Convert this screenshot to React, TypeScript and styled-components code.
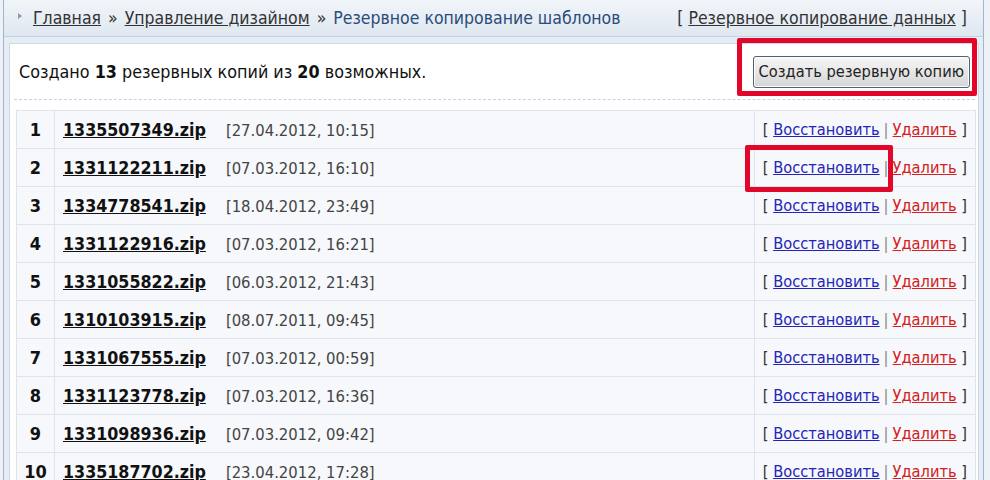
import React from "react";
import styled, { createGlobalStyle } from "styled-components";

const GlobalStyle = createGlobalStyle`
  html, body {
    margin: 0;
    padding: 0;
    background: #eef2f6;
    font-family: "DejaVu Sans Condensed", "DejaVu Sans", sans-serif;
    overflow: hidden;
  }
`;

const Frame = styled.div`
  position: relative;
  margin-left: 3px;
  width: 979px;
  height: 480px;
  border-left: 1px solid #9fb6cf;
  border-right: 1px solid #9fb6cf;
  background: #e6edf4;
  overflow: hidden;
`;

const Breadcrumbs = styled.div`
  display: flex;
  align-items: center;
  justify-content: space-between;
  height: 36px;
  padding: 0 16px 0 14px;
  background: linear-gradient(#f1f5f9, #dfe7f0);
  border-bottom: 1px solid #c3d1e0;
  font-size: 17.5px;
  color: #333;
`;

const Trail = styled.div`
  display: flex;
  align-items: center;
  gap: 7px;
`;

const Arrow = styled.span`
  width: 0;
  height: 0;
  border-top: 3px solid transparent;
  border-bottom: 3px solid transparent;
  border-left: 4px solid #8a9bb0;
  margin-right: 4px;
  margin-top: -5px;
`;

const CrumbLink = styled.a`
  color: #333;
  text-decoration: underline;
`;

const Current = styled.span`
  color: #2b4c7a;
`;

const Bracket = styled.span`
  color: #333;
`;

const Content = styled.div`
  margin: 6px 4px 0 5px;
  background: #fff;
  border: 1px solid #cdd9e5;
  border-bottom: none;
  height: 460px;
`;

const Summary = styled.div`
  display: flex;
  align-items: center;
  justify-content: space-between;
  height: 55px;
  margin: 0 3px 0 4px;
  padding: 0 5px 0 5px;
  border-bottom: 1px dashed #c9d2db;
  font-size: 17.8px;
  color: #111;
`;

const CreateButton = styled.button`
  height: 32px;
  padding: 0 5px;
  font-family: inherit;
  font-size: 16.3px;
  color: #222;
  background: linear-gradient(#f7f7f7, #e6e6e6 50%, #d6d6d6);
  border: 1px solid #4d6275;
  border-radius: 3px;
  box-shadow: inset 0 0 0 1px #fdfdfd;
`;

const Table = styled.table`
  margin: 10px 3px 0 6px;
  width: 960px;
  border-collapse: collapse;
  font-size: 16.3px;
`;

const Row = styled.tr`
  height: 38px;
`;

const Cell = styled.td<{ $align?: string; $width?: number }>`
  border: 1px solid #dde4eb;
  background: #f6f8fb;
  padding: 0 8px;
  text-align: ${(p) => p.$align || "left"};
  width: ${(p) => (p.$width ? `${p.$width}px` : "auto")};
  white-space: nowrap;
  color: #444;
`;

const Num = styled(Cell)`
  font-weight: bold;
  color: #111;
  padding: 0;
  font-size: 18px;
`;

const FileLink = styled.a`
  font-weight: bold;
  font-size: 17.7px;
  color: #111;
  text-decoration: underline;
  margin-right: 20px;
`;

const DateText = styled.span`
  color: #444;
  font-size: 16.5px;
`;

const Action = styled.a<{ $danger?: boolean }>`
  color: ${(p) => (p.$danger ? "#d42020" : "#2424b8")};
  text-decoration: underline;
`;

const Sep = styled.span`
  color: #888;
  margin: 0 4px;
`;

const Highlight = styled.div`
  position: absolute;
  border: 5px solid #e2062a;
  border-radius: 2px;
`;

const backups = [
  ["1335507349.zip", "27.04.2012, 10:15"],
  ["1331122211.zip", "07.03.2012, 16:10"],
  ["1334778541.zip", "18.04.2012, 23:49"],
  ["1331122916.zip", "07.03.2012, 16:21"],
  ["1331055822.zip", "06.03.2012, 21:43"],
  ["1310103915.zip", "08.07.2011, 09:45"],
  ["1331067555.zip", "07.03.2012, 00:59"],
  ["1331123778.zip", "07.03.2012, 16:36"],
  ["1331098936.zip", "07.03.2012, 09:42"],
  ["1335187702.zip", "23.04.2012, 17:28"],
];

export default function App() {
  return (
    <>
      <GlobalStyle />
      <Frame>
        <Breadcrumbs>
          <Trail>
            <Arrow />
            <CrumbLink>Главная</CrumbLink>
            <span>»</span>
            <CrumbLink>Управление дизайном</CrumbLink>
            <span>»</span>
            <Current>Резервное копирование шаблонов</Current>
          </Trail>
          <Bracket>
            [ <CrumbLink>Резервное копирование данных</CrumbLink> ]
          </Bracket>
        </Breadcrumbs>
        <Content>
          <Summary>
            <span>
              Создано <b>13</b> резервных копий из <b>20</b> возможных.
            </span>
            <CreateButton>Создать резервную копию</CreateButton>
          </Summary>
          <Table>
            <tbody>
              {backups.map(([file, date], i) => (
                <Row key={file}>
                  <Num $align="center" $width={37}>
                    {i + 1}
                  </Num>
                  <Cell>
                    <FileLink>{file}</FileLink>
                    <DateText>[{date}]</DateText>
                  </Cell>
                  <Cell $align="right" $width={204}>
                    <Bracket>[ </Bracket>
                    <Action>Восстановить</Action>
                    <Sep>|</Sep>
                    <Action $danger>Удалить</Action>
                    <Bracket> ]</Bracket>
                  </Cell>
                </Row>
              ))}
            </tbody>
          </Table>
        </Content>
        <Highlight style={{ left: 733, top: 38, width: 230, height: 48 }} />
        <Highlight style={{ left: 741, top: 145, width: 138, height: 37 }} />
      </Frame>
    </>
  );
}
